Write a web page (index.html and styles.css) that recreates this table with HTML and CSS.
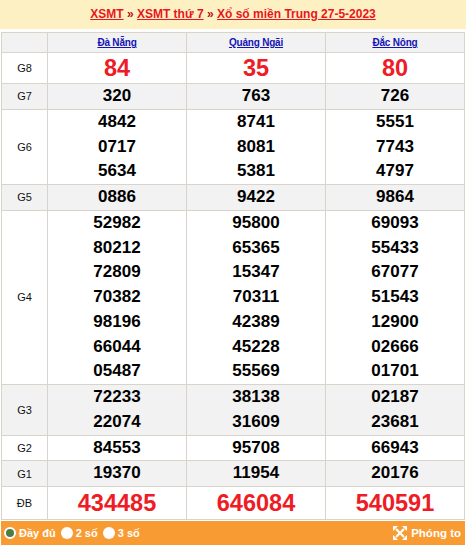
FILE: index.html
```html
<!DOCTYPE html>
<html lang="vi">
<head>
<meta charset="utf-8">
<link rel="stylesheet" href="styles.css">
</head>
<body>
<div class="crumb">
  <a href="#">XSMT</a> <span class="sep">»</span> <a href="#">XSMT thứ 7</a> <span class="sep">»</span> <a href="#">Xổ số miền Trung 27-5-2023</a>
</div>
<div class="box">
<table class="kq">
  <colgroup><col class="c-lbl"><col class="c-prov"><col class="c-prov"><col class="c-prov"></colgroup>
  <thead>
    <tr class="head"><th></th><th><a href="#">Đà Nẵng</a></th><th><a href="#">Quảng Ngãi</a></th><th><a href="#">Đắc Nông</a></th></tr>
  </thead>
  <tbody>
    <tr class="g8"><td class="lbl">G8</td><td><div>84</div></td><td><div>35</div></td><td><div>80</div></td></tr>
    <tr class="alt"><td class="lbl">G7</td><td><div>320</div></td><td><div>763</div></td><td><div>726</div></td></tr>
    <tr><td class="lbl">G6</td>
      <td><div>4842</div><div>0717</div><div>5634</div></td>
      <td><div>8741</div><div>8081</div><div>5381</div></td>
      <td><div>5551</div><div>7743</div><div>4797</div></td></tr>
    <tr class="alt"><td class="lbl">G5</td><td><div>0886</div></td><td><div>9422</div></td><td><div>9864</div></td></tr>
    <tr><td class="lbl">G4</td>
      <td><div>52982</div><div>80212</div><div>72809</div><div>70382</div><div>98196</div><div>66044</div><div>05487</div></td>
      <td><div>95800</div><div>65365</div><div>15347</div><div>70311</div><div>42389</div><div>45228</div><div>55569</div></td>
      <td><div>69093</div><div>55433</div><div>67077</div><div>51543</div><div>12900</div><div>02666</div><div>01701</div></td></tr>
    <tr class="alt"><td class="lbl">G3</td>
      <td><div>72233</div><div>22074</div></td>
      <td><div>38138</div><div>31609</div></td>
      <td><div>02187</div><div>23681</div></td></tr>
    <tr><td class="lbl">G2</td><td><div>84553</div></td><td><div>95708</div></td><td><div>66943</div></td></tr>
    <tr class="alt"><td class="lbl">G1</td><td><div>19370</div></td><td><div>11954</div></td><td><div>20176</div></td></tr>
    <tr class="db"><td class="lbl">ĐB</td><td><div>434485</div></td><td><div>646084</div></td><td><div>540591</div></td></tr>
  </tbody>
</table>
<div class="bar">
  <div class="opts">
    <span class="opt"><span class="radio on"></span>Đầy đủ</span>
    <span class="opt"><span class="radio"></span>2 số</span>
    <span class="opt"><span class="radio"></span>3 số</span>
  </div>
  <div class="zoom">
    <svg width="14" height="14" viewBox="0 0 14 14" aria-hidden="true">
      <path d="M3 3 L11 11 M11 3 L3 11" stroke="#fff" stroke-width="2.2" fill="none"/>
      <path d="M0 0 H5 L0 5 Z M14 0 V5 L9 0 Z M0 14 V9 L5 14 Z M14 14 H9 L14 9 Z" fill="#fff"/>
    </svg>
    <span>Phóng to</span>
  </div>
</div>
</div>
</body>
</html>
```
FILE: styles.css
```css
html, body {
  margin: 0;
  padding: 0;
  background: #fff;
  font-family: "Liberation Sans", Arial, sans-serif;
}
.crumb {
  height: 29px;
  line-height: 29px;
  background: #fdf1c3;
  text-align: center;
  font-size: 12px;
  font-weight: bold;
  color: #c4161c;
}
.crumb a {
  color: #e8161f;
  text-decoration: underline;
}
.crumb .sep {
  color: #b3141a;
}
.box {
  margin: 3px 1px 0;
}
.kq {
  width: 464px;
  border-collapse: collapse;
  table-layout: fixed;
  border: 1px solid #d8d3cb;
}
.c-lbl { width: 46px; }
.kq th, .kq td {
  border: 1px solid #d8d3cb;
  padding: 0;
  text-align: center;
  vertical-align: middle;
}
.head th {
  background: #f2f2f2;
  height: 19px;
  font-size: 10px;
  font-weight: normal;
  line-height: 19px;
}
.head a {
  color: #1414b4;
  text-decoration: underline;
  font-weight: bold;
  letter-spacing: -0.2px;
}
.kq td {
  font-size: 17px;
  font-weight: bold;
  color: #000;
}
.kq td div {
  line-height: 24.75px;
}
.kq td.lbl {
  font-size: 11px;
  font-weight: normal;
  color: #111;
}
.alt td {
  background: #f2f2f2;
}
.g8 td div {
  font-size: 23.5px;
  line-height: 30px;
  color: #ee1c25;
}
.db td div {
  font-size: 23.5px;
  line-height: 32px;
  color: #ee1c25;
}
.bar {
  height: 24px;
  margin-top: 1px;
  background: #f99b33;
  display: flex;
  align-items: center;
  justify-content: space-between;
  color: #fff;
  font-size: 11px;
  font-weight: bold;
}
.opts {
  display: flex;
  align-items: center;
  gap: 5px;
  padding-left: 3px;
}
.opt {
  display: flex;
  align-items: center;
  gap: 3px;
}
.radio {
  width: 12px;
  height: 12px;
  border-radius: 50%;
  background: #fff;
  box-sizing: border-box;
}
.radio.on {
  border: 2px solid #fff;
  background: #4b7d47;
}
.zoom {
  display: flex;
  align-items: center;
  gap: 4px;
  padding-right: 4px;
  font-size: 11.5px;
}
.zoom svg { display: block; }
```
